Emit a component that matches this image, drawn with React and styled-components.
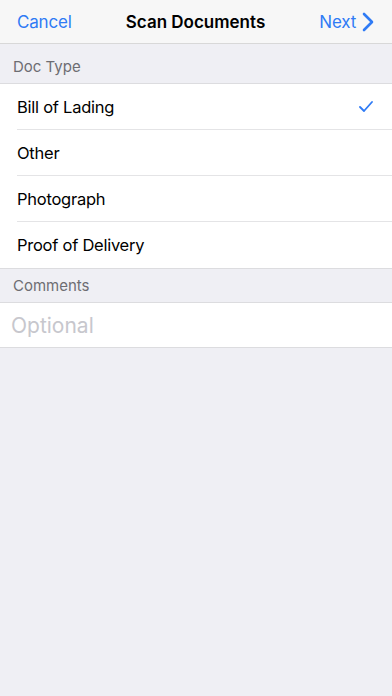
import React, { useState } from "react";
import styled, { createGlobalStyle } from "styled-components";

const GlobalStyle = createGlobalStyle`
  html, body {
    margin: 0;
    padding: 0;
    background: #efeff4;
    font-family: "Inter", "Liberation Sans", sans-serif;
  }
  * { box-sizing: border-box; }
`;

const Page = styled.div`
  width: 392px;
  min-height: 696px;
  background: #efeff4;
`;

const NavBar = styled.div`
  height: 44px;
  background: #f7f7f7;
  border-bottom: 1px solid #d8d8d8;
  display: grid;
  grid-template-columns: 1fr auto 1fr;
  align-items: center;
  padding: 0 18px 0 17px;
`;

const NavButton = styled.button`
  border: none;
  background: none;
  padding: 0;
  color: #2f7bf5;
  font-family: inherit;
  font-size: 17px;
  letter-spacing: -0.2px;
  display: flex;
  align-items: center;
  gap: 6px;
  justify-self: ${(p) => (p.$right ? "end" : "start")};
`;

const Title = styled.div`
  font-size: 17px;
  font-weight: 600;
  color: #000;
`;

const SectionHeader = styled.div`
  height: ${(p) => p.$height}px;
  padding: 0 13px 7px;
  display: flex;
  align-items: flex-end;
  font-size: 15px;
  color: #6d6d72;
`;

const Group = styled.div`
  background: #fff;
  border-top: 1px solid #dcdcdf;
  border-bottom: 1px solid #dcdcdf;
`;

const Row = styled.div`
  height: 46px;
  margin-left: 17px;
  padding-right: 19px;
  display: flex;
  align-items: center;
  justify-content: space-between;
  font-size: 16.5px;
  letter-spacing: -0.25px;
  color: #000;
  border-bottom: ${(p) => (p.$last ? "none" : "1px solid #e4e4e6")};
  cursor: pointer;
`;

const CommentInput = styled.input`
  width: 100%;
  height: 44px;
  border: none;
  outline: none;
  padding: 0 11px;
  font-family: inherit;
  font-size: 21px;
  color: #000;
  background: #fff;
  &::placeholder {
    color: #c7c7cd;
  }
`;

const Check = () => (
  <svg width="14" height="11" viewBox="0 0 14 11">
    <path d="M1 6l4 4 8-9" fill="none" stroke="#2f7bf5" strokeWidth="1.8" strokeLinecap="round" strokeLinejoin="round" />
  </svg>
);

const Chevron = () => (
  <svg width="12" height="20" viewBox="0 0 12 20">
    <path d="M2 2l8 8-8 8" fill="none" stroke="#2f7bf5" strokeWidth="2.6" strokeLinecap="round" strokeLinejoin="round" />
  </svg>
);

const types = ["Bill of Lading", "Other", "Photograph", "Proof of Delivery"];

export default function App() {
  const [selected, setSelected] = useState("Bill of Lading");
  return (
    <Page>
      <GlobalStyle />
      <NavBar>
        <NavButton>Cancel</NavButton>
        <Title>Scan Documents</Title>
        <NavButton $right>
          Next <Chevron />
        </NavButton>
      </NavBar>
      <SectionHeader $height={39}>Doc Type</SectionHeader>
      <Group>
        {types.map((t, i) => (
          <Row key={t} $last={i === types.length - 1} onClick={() => setSelected(t)}>
            {t}
            {selected === t && <Check />}
          </Row>
        ))}
      </Group>
      <SectionHeader $height={33}>Comments</SectionHeader>
      <Group>
        <CommentInput placeholder="Optional" />
      </Group>
    </Page>
  );
}
